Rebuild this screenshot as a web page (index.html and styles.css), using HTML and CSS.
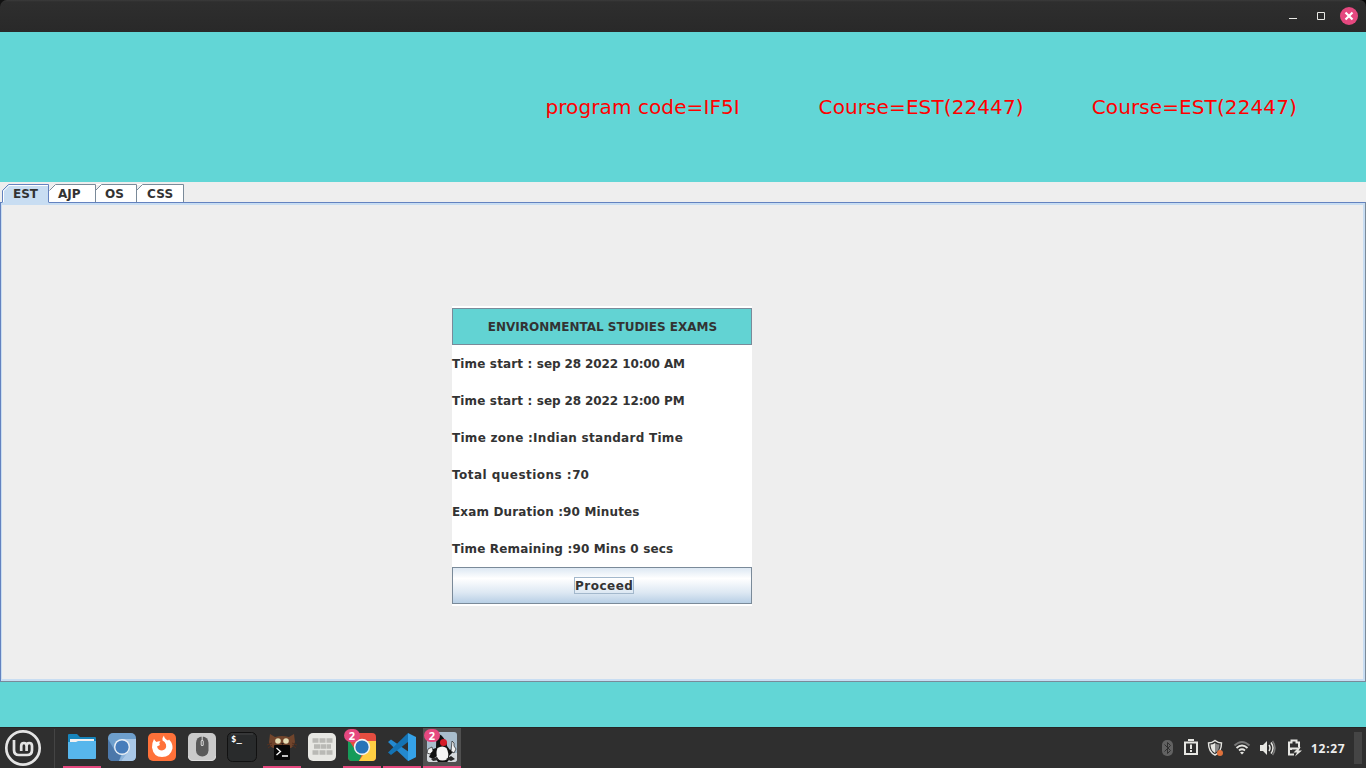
FILE: index.html
```html
<!DOCTYPE html>
<html lang="en">
<head>
<meta charset="utf-8">
<title>Exams</title>
<link rel="stylesheet" href="styles.css">
</head>
<body>
<div class="titlebar">
  <svg width="80" height="32" viewBox="0 0 80 32">
    <path d="M3 18.500h8" stroke="#e8e8e4" fill="none"/>
    <path d="M31.500 12.500h7v7h-7z" stroke="#e8e8e4" fill="none"/>
    <circle cx="63" cy="16" r="9" fill="#e5487f"/>
    <path d="M59.500 12.500l7 7M66.500 12.500l-7 7" stroke="#fff" stroke-width="2.200"/>
    <path d="M73 0h7v7q0-7-7-7" fill="#080808"/>
  </svg>
</div>
<header class="banner">
  <span></span><span></span>
  <span class="info">program code=IF5I</span>
  <span class="info">Course=EST(22447)</span>
  <span class="info">Course=EST(22447)</span>
</header>
<nav class="tabs">
  <svg class="tab-shapes" width="190" height="23" viewBox="0 0 190 23">
    <path d="M49 20V8l6-6h128v18z" fill="#fff"/>
    <path d="M49 2h6l-6 6zM96 3h5l-5 5zM137 3h5l-5 5z" fill="#eee"/>
    <path d="M49.500 8.500l6-6h40V20M95.500 8.500l6-6h35V20M136.500 8.500l6-6h41V20" fill="none" stroke="#7a8a99"/>
    <path d="M2.500 23V8.500l6-6h40V23z" fill="#c8ddf2"/>
    <path d="M2.500 20V8.500l6-6h40V20" fill="none" stroke="#6382bf"/>
    <path d="M3.500 20V9l5.500-5.500H48" fill="none" stroke="#fff"/>
  </svg>
  <span class="tab est">EST</span><span class="tab ajp">AJP</span><span class="tab os">OS</span><span class="tab css">CSS</span>
</nav>
<main class="panel">
  <section class="card">
    <h1 class="card-title">ENVIRONMENTAL STUDIES EXAMS</h1>
    <p class="row"><span class="loose">Time start : </span><span class="tight">sep 28 2022 10:00 AM</span></p>
    <p class="row"><span class="loose">Time start : </span><span class="tight">sep 28 2022 12:00 PM</span></p>
    <p class="row"><span class="wide">Time zone :Indian standard Time</span></p>
    <p class="row"><span class="wider">Total questions :</span><span>70</span></p>
    <p class="row"><span class="loose">Exam Duration :90 Minutes</span></p>
    <p class="row"><span class="loose">Time Remaining :90 Mins 0 secs</span></p>
    <button class="proceed"><span>Proceed</span></button>
  </section>
</main>
<div class="strip"></div>
<footer class="taskbar">
  <svg class="mint" width="55" height="41" viewBox="0 0 55 41">
    <circle cx="23" cy="21" r="16.700" fill="none" stroke="#e4e4e4" stroke-width="2.700"/>
    <path d="M14 13v10q0 5 5 5h8q5 0 5-5v-4q0-3-2.700-3t-2.700 3v5M26.600 19q0-3-2.700-3t-2.700 3v5" fill="none" stroke="#e4e4e4" stroke-width="2.700"/>
    <path d="M54.500 2v39" stroke="#444"/>
  </svg>
  <div class="apps">
    <div class="app running"><svg viewBox="0 0 38 38">
      <path d="M5 7q0-1 1-1h8l3 3h15q1 0 1 1v12H5z" fill="#1684bb"/><path d="M7 11h24v4H7z" fill="#f1f1f1"/><path d="M5 14h8l2-1h18v17q0 1-1 1H6q-1 0-1-1z" fill="#57b6ec"/></svg></div>
    <div class="app"><svg viewBox="0 0 38 38">
      <rect x="5" y="5" width="28" height="28" rx="5" fill="#6e9fcc"/><path d="M19 11h14v17q0 5-5 5H18l8-12z" fill="#a9c8e7"/><path d="M5 11l7 12 6 4-2 6h-6q-5 0-5-5z" fill="#4c78aa"/><path d="M12 22l7 5-3 6h2l8-10z" fill="#8eb4da"/><circle cx="19" cy="19" r="8" fill="#e9eff5"/><circle cx="19" cy="19" r="6.600" fill="#477dbb"/></svg></div>
    <div class="app"><svg viewBox="0 0 38 38">
      <rect x="5" y="5" width="28" height="28" rx="5" fill="#ff7139"/><path d="M11 11q1 2 2.500 3 2-1 4-.5-2 1.500-.5 3.500l-3 1.500q1 4 5 4 5-1 4-6-1-3-3.500-4-.5-3 1.500-5 0 3 4 5l1-1q4 4 3.500 9-2 8.500-10.500 8.500T9 19.500q0-5 2-8.500" fill="#fff"/></svg></div>
    <div class="app"><svg viewBox="0 0 38 38">
      <rect x="5" y="5" width="28" height="28" rx="5" fill="#cacaca"/><path d="M5.500 28q0 4.500 4.500 4.500h18q4.500 0 4.500-4.500" fill="none" stroke="#ddd"/><rect x="13" y="8.500" width="12.500" height="20" rx="6.200" fill="#595959"/><path d="M19.200 8v5" stroke="#ddd"/><rect x="17.700" y="12" width="3" height="6" rx="1.500" fill="#ddd"/><path d="M19.200 13v4" stroke="#555"/></svg></div>
    <div class="app"><svg viewBox="0 0 38 38">
      <rect x="4.500" y="4.500" width="29" height="29" rx="5" fill="#292b2c" stroke="#111"/><path d="M8 6h22" stroke="#444"/><text x="8" y="14" class="prompt">$_</text></svg></div>
    <div class="app running"><svg viewBox="0 0 38 38">
      <path d="M7 6l5 3q7-2 14 0l5-3 1 8q-2 5-4 6H10q-3-1-4-6z" fill="#71452c"/><path d="M9 15l-5 2M9 17l-4 3M29 15l5 2M29 17l4 3" stroke="#55301f"/><circle cx="15" cy="13" r="2.800" fill="#e7dfb6"/><circle cx="23" cy="13" r="2.800" fill="#e7dfb6"/><path d="M18 15h3l-1.500 2z" fill="#302018"/><rect x="11" y="17" width="16" height="15" rx="1" fill="#080808"/><path d="M13.500 20l4 3.500-4 3.500M19 28h6" fill="none" stroke="#fff" stroke-width="1.300"/></svg></div>
    <div class="app"><svg viewBox="0 0 38 38">
      <rect x="5" y="5" width="28" height="28" rx="5" fill="#e7e7e3"/><path d="M9.500 12.500h6M16.500 12.500h6M23.500 12.500h6M11 18.500h6M17.500 18.500h6M24 18.500h4M9.500 24.500h6M16.500 24.500h6M23.500 24.500h6" stroke="#b9b9b5" stroke-width="4.500"/></svg></div>
    <div class="app running"><svg viewBox="0 0 38 38">
      <rect x="5" y="5" width="28" height="28" rx="4" fill="#e54d40"/><path d="M5 11l8 12 6 3-3 7H9q-4 0-4-4z" fill="#159b59"/><path d="M19 13h14v16q0 4-4 4H16l8-12z" fill="#ffce43"/><circle cx="19" cy="19" r="8.200" fill="#f2f2f2"/><circle cx="19" cy="19" r="6.600" fill="#2874b8"/></svg><b class="count">2</b></div>
    <div class="app running"><svg viewBox="0 0 38 38">
      <path d="M5 14l3-2.500L33 29l-8 4z" fill="#2489cf"/><path d="M25 5v9L8 27l-3-2.500z" fill="#1473b4"/><path d="M25 5l8 4v20l-8 4z" fill="#35a2e8"/></svg></div>
    <div class="app running active"><svg viewBox="0 0 38 38">
      <rect x="4" y="4" width="30" height="30" rx="3" fill="#a9bdcc"/><path d="M4 25h30v6q0 3-3 3H7q-3 0-3-3z" fill="#d5d9dc"/>
      <path d="M14 6q4-1 8 6 2 2 2 6l3 4 3-2 1 3-5 5q1 4-2 6h-9q-2-2-1-6l-4 3-4-2 4-8 3-1q0-8 1-14z" fill="#111"/>
      <path d="M14.500 20q5-3 9 0 3 6 1 11-5 3-10 0-2-6 0-11z" fill="#f5f5f5"/>
      <path d="M5 21l4-2 1 4-3 3-3-1zM29 13l2 2v3l2 3-2 4-3-2z" fill="#f1f1f1" stroke="#222" stroke-width=".7"/>
      <path d="M8 31l6-2 2 3-6 1zM23 31l5-3 4 3-4 2z" fill="#282828"/>
      <circle cx="20.500" cy="14.500" r="3.500" fill="#d51d29"/></svg><b class="count">2</b></div>
  </div>
  <svg class="tray" width="150" height="41" viewBox="0 0 150 41" fill="none">
    <rect x="6" y="13" width="11" height="16" rx="5" fill="#626262"/><path d="M8.500 17.500l6 6-3 3v-11l3 3-6 6" stroke="#303030"/>
    <path d="M29 15.500h12V27H29z" stroke="#e6e6e2" stroke-width="2"/><path d="M33 14v-1h4v1M35 17.500v4.500M35 23v2" stroke="#e6e6e2" stroke-width="2"/>
    <path d="M59 13.500q3 2.500 6.500 2.500 0 9-6.500 12-6.500-3-6.500-12 3.500 0 6.500-2.500z" stroke="#e6e6e2" stroke-width="1.400"/><path d="M59 16q2 1.500 4.500 1.500 0 6-4.500 8.500z" fill="#888"/><path d="M59 16q-2 1.500-4.500 1.500 0 6 4.500 8.500z" fill="#e6e6e2"/><circle cx="64" cy="26" r="3" fill="#df713b"/>
    <path d="M78.500 18.500q7.500-7 15 0" stroke="#777" stroke-width="2"/><path d="M80.500 21q5.500-5 11 0M83 23.500q3-2.500 6 0" stroke="#e6e6e2" stroke-width="1.800"/><path d="M84 25.500q2-1.500 4 0l-2 2z" fill="#e6e6e2"/>
    <path d="M104 18h3l4-4v14l-4-4h-3z" fill="#e6e6e2"/><path d="M113 18q2 3 0 6M115 15.500q4 5.500 0 11" stroke="#e6e6e2" stroke-width="1.500"/><path d="M116.500 14q5 7 0 14" stroke="#777" stroke-width="1.500"/>
    <path d="M138 27.500h-5V15.500h2.500v-2h5v2h2.500v5" stroke="#e6e6e2" stroke-width="2"/><path d="M135 23v-1.500h7" stroke="#e6e6e2" stroke-width="2"/><path d="M143.500 19.500l-6 6h3.500l-2 4 7-6h-3.500l2-3z" fill="#e6e6e2"/>
  </svg>
  <span class="clock">12:27</span>
  <span class="desktop"></span>
</footer>
</body>
</html>
```
FILE: styles.css
```css
* { box-sizing: border-box; }
html { background: #111; }
body { margin: 0; width: 1366px; height: 768px; overflow: hidden; display: flex; flex-direction: column; color: #333; font-family: "DejaVu Sans", sans-serif; }
svg { display: block; flex: none; }
.titlebar { height: 32px; display: flex; justify-content: flex-end; background: linear-gradient(#3b3b3b 0, #2e2e2e 2px, #292929); border-top-left-radius: 7px; flex: none; }
.banner { height: 150px; flex: none; display: grid; grid-template-columns: repeat(5, 1fr); align-items: center; background: #62d6d6; }
.info { margin-left: -1px; color: #f00; font-size: 20px; line-height: 24px; letter-spacing: .1px; white-space: nowrap; }
.tabs { height: 20px; flex: none; position: relative; z-index: 1; display: flex; background: #eee; padding-left: 13px; font: bold 12px/24px "DejaVu Sans", sans-serif; }
.tab-shapes { position: absolute; left: 0; top: 0; }
.tab { position: relative; }
.est { width: 45px; }
.ajp { width: 47px; }
.os { width: 42px; }
.css { letter-spacing: .2px; }
.panel { height: 480px; flex: none; display: flex; background: #eee; border: 1px solid #6382bf; border-right-color: #7a8a99; border-bottom-color: #7a8a99; box-shadow: inset 0 2px #c8ddf2, inset 1px 0 #c8ddf2, inset -2px -2px #c8ddf2; padding: 103px 0 0 451px; }
.card { width: 300px; height: 300px; background: #fff; padding: 2px 0; font: bold 12px/37px "DejaVu Sans", sans-serif; }
.card-title { margin: 0; height: 37px; font: inherit; line-height: 37px; padding-left: 1px; text-align: center; background: #62d3d3; border: 1px solid #7a8a99; }
.row { margin: 0; height: 37px; line-height: 39px; white-space: pre; }
.loose { letter-spacing: .15px; }
.tight { letter-spacing: -.1px; }
.wide { letter-spacing: .28px; }
.wider { letter-spacing: .47px; }
.proceed { display: flex; align-items: center; justify-content: center; width: 300px; height: 37px; padding: 0 0 0 4px; border: 1px solid #7a8a99; background: linear-gradient(#dde8f3 0%, #fff 30%, #dde8f3 70%, #b8cfe5 100%); color: #333; font: bold 12px/16px "DejaVu Sans", sans-serif; }
.proceed span { border: 1px solid #a3b8cc; height: 17px; width: 60px; text-align: left; letter-spacing: .5px; }
.strip { height: 45px; flex: none; background: #62d6d6; }
.taskbar { height: 41px; flex: none; display: flex; background: #2f2f2f; border-top: 1px solid #252525; padding-right: 4px; }
.mint { margin-top: -1px; }
.apps { display: flex; gap: 2px; margin-left: 8px; }
.app { width: 38px; height: 40px; position: relative; border-bottom: 2px solid transparent; }
.app svg { width: 38px; height: 38px; }
.running { border-color: #e5487f; }
.active { background: #505050; }
.count { position: absolute; left: 1px; top: 1px; width: 16px; height: 13px; border-radius: 7px; background: #e5487f; color: #fff; text-align: center; font: bold 11px/13px "Noto Sans", sans-serif; }
.prompt { fill: #fff; font: bold 9px "DejaVu Sans Mono", monospace; }
.tray { margin: -1px 0 0 auto; }
.clock { width: 48px; padding-left: 5px; color: #eee; font: bold 12px/41px "Noto Sans", sans-serif; letter-spacing: .7px; }
.desktop { width: 8px; height: 32px; margin-top: 4px; background: #454545; }
```
